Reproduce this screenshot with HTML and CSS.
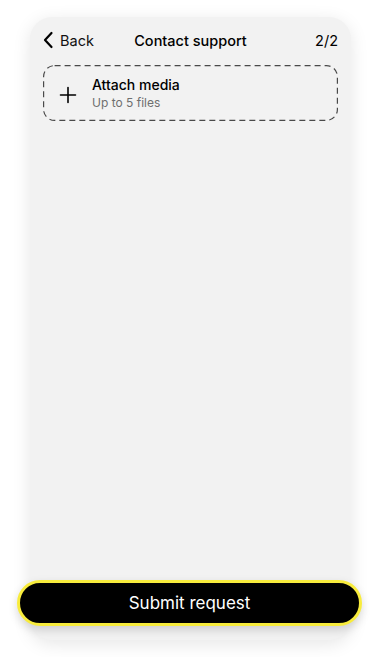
FILE: index.html
```html
<!DOCTYPE html>
<html lang="en">
<head>
<meta charset="utf-8">
<link rel="stylesheet" href="styles.css">
</head>
<body>
<div class="screen">
  <div class="card">
    <header class="topbar">
      <a class="back">
        <svg width="12" height="18" viewBox="0 0 12 18"><path d="M9.5 2 L3 9 L9.5 16" fill="none" stroke="#000" stroke-width="2.2" stroke-linecap="round" stroke-linejoin="round"/></svg>
        <span>Back</span>
      </a>
      <h1 class="title">Contact support</h1>
      <span class="step">2/2</span>
    </header>
    <div class="attach">
      <svg class="dash" width="100%" height="100%" preserveAspectRatio="none"><rect x="0.6" y="0.6" width="calc(100% - 1.2px)" height="calc(100% - 1.2px)" rx="11" ry="11" fill="none" stroke="#4a4a4a" stroke-width="1.2" stroke-dasharray="6 4"/></svg>
      <svg class="plus" width="18" height="18" viewBox="0 0 18 18"><path d="M9 1.5 V16.5 M1.5 9 H16.5" stroke="#000" stroke-width="1.6" stroke-linecap="round"/></svg>
      <div class="attach-text">
        <div class="attach-title">Attach media</div>
        <div class="attach-sub">Up to 5 files</div>
      </div>
    </div>
  </div>
  <button class="submit">Submit request</button>
</div>
</body>
</html>
```
FILE: styles.css
```css
* { box-sizing: border-box; }
html, body { margin: 0; padding: 0; background: #fff; }
body { width: 380px; height: 657px; font-family: "Inter", "Open Sans", sans-serif; color: #000; }
.screen { position: relative; width: 380px; height: 657px; padding: 17px 29px 0 30px; }
.card {
  height: 623px;
  background: #f2f2f2;
  border-radius: 22px;
  box-shadow: 0 4px 18px rgba(0,0,0,0.10);
  padding: 13px 13px 0 13px;
}
.topbar { display: grid; grid-template-columns: 1fr auto 1fr; align-items: center; height: 20px; }
.back { display: flex; align-items: center; gap: 6px; font-size: 14.5px; font-weight: 400; color: #111; justify-self: start; }
.back svg { display: block; margin-left: -1px; }
.title { margin: 0; font-size: 14.5px; font-weight: 500; }
.step { font-size: 14.5px; font-weight: 400; justify-self: end; }
.attach {
  position: relative;
  margin-top: 15px;
  height: 56px;
  display: flex;
  align-items: center;
  padding-left: 16px;
  gap: 15px;
}
.dash { position: absolute; inset: 0; overflow: visible; }
.plus { display: block; margin-top: 4px; }
.attach-title { font-size: 14px; font-weight: 500; line-height: 18px; }
.attach-sub { font-size: 12px; color: #6f6f6f; line-height: 16px; margin-top: 1px; }
.submit {
  position: absolute;
  left: 17px;
  top: 580px;
  width: 345px;
  height: 46px;
  background: #000;
  border: 3px solid #f8ec3c;
  border-radius: 23px;
  color: #fff;
  font-family: inherit;
  font-size: 17px;
  font-weight: 400;
  box-shadow: 0 4px 10px rgba(0,0,0,0.15);
}
```
